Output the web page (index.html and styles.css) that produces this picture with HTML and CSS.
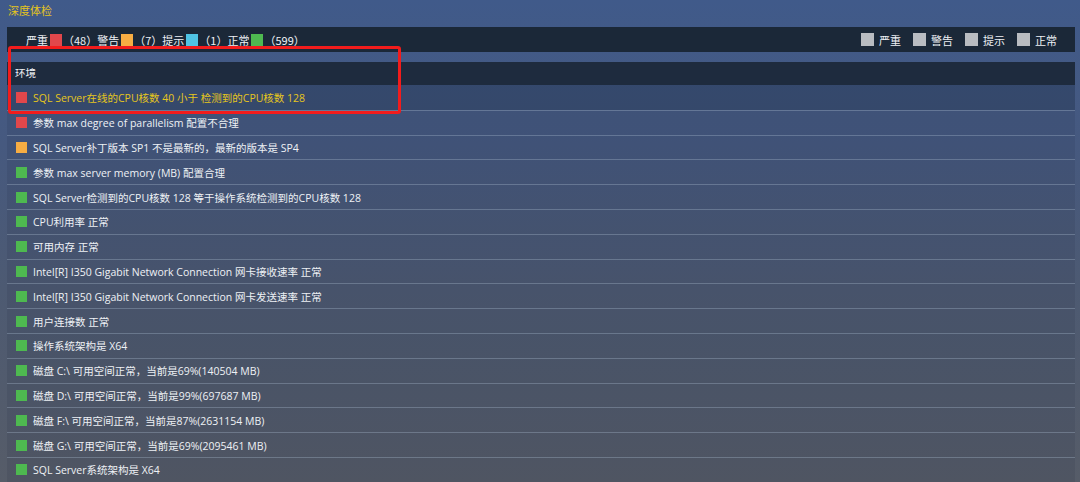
FILE: index.html
```html
<!DOCTYPE html>
<html lang="zh-CN">
<head>
    <meta charset="UTF-8">
    <title>深度体检</title>
    <link rel="stylesheet" href="styles.css">
</head>
<body>
    <div class="page">
        <div class="title">深度体检</div>

        <div class="summary">
            <div class="counts">
                <span>严重</span><i class="sq red"></i><span class="num">（48）</span>
                <span>警告</span><i class="sq orange"></i><span class="num">（7）</span>
                <span>提示</span><i class="sq blue"></i><span class="num">（1）</span>
                <span>正常</span><i class="sq green"></i><span class="num">（599）</span>
            </div>
            <div class="filters">
                <label><i class="box"></i>严重</label>
                <label><i class="box"></i>警告</label>
                <label><i class="box"></i>提示</label>
                <label><i class="box"></i>正常</label>
            </div>
        </div>

        <div class="table">
            <div class="group">环境</div>
            <div class="row active"><i class="sq red"></i>SQL Server在线的CPU核数 40 小于 检测到的CPU核数 128</div>
            <div class="row"><i class="sq red"></i>参数 max degree of parallelism 配置不合理</div>
            <div class="row"><i class="sq orange"></i>SQL Server补丁版本 SP1 不是最新的，最新的版本是 SP4</div>
            <div class="row"><i class="sq green"></i>参数 max server memory (MB) 配置合理</div>
            <div class="row"><i class="sq green"></i>SQL Server检测到的CPU核数 128 等于操作系统检测到的CPU核数 128</div>
            <div class="row"><i class="sq green"></i>CPU利用率 正常</div>
            <div class="row"><i class="sq green"></i>可用内存 正常</div>
            <div class="row"><i class="sq green"></i>Intel[R] I350 Gigabit Network Connection 网卡接收速率 正常</div>
            <div class="row"><i class="sq green"></i>Intel[R] I350 Gigabit Network Connection 网卡发送速率 正常</div>
            <div class="row"><i class="sq green"></i>用户连接数 正常</div>
            <div class="row"><i class="sq green"></i>操作系统架构是 X64</div>
            <div class="row"><i class="sq green"></i>磁盘 C:\ 可用空间正常，当前是69%(140504 MB)</div>
            <div class="row"><i class="sq green"></i>磁盘 D:\ 可用空间正常，当前是99%(697687 MB)</div>
            <div class="row"><i class="sq green"></i>磁盘 F:\ 可用空间正常，当前是87%(2631154 MB)</div>
            <div class="row"><i class="sq green"></i>磁盘 G:\ 可用空间正常，当前是69%(2095461 MB)</div>
            <div class="row"><i class="sq green"></i>SQL Server系统架构是 X64</div>
        </div>

        <div class="mark"></div>
    </div>
</body>
</html>
```

FILE: styles.css
```css
html, body {
    margin: 0;
    padding: 0;
    height: 100%;
    overflow: hidden;
}
body {
    font-family: "Open Sans", "Noto Sans CJK SC", sans-serif;
    font-size: 10.5px;
    color: #eef1f5;
    background: linear-gradient(180deg, #405a8a 0%, #46597f 30%, #4d5a72 60%, #565c68 100%);
}
.page {
    position: relative;
    padding: 0 5px 0 7px;
    height: 100%;
}
.title {
    color: #e4c41c;
    font-size: 11px;
    height: 27px;
    line-height: 22px;
    padding-left: 1px;
}
.summary {
    display: flex;
    justify-content: space-between;
    align-items: center;
    height: 25px;
    font-size: 11px;
    background-color: #1b2838;
    padding: 0 18px 0 19px;
}
.counts, .filters {
    display: flex;
    align-items: center;
}
.counts .sq {
    width: 12px;
    height: 12px;
    margin: 0 1px 0 2px;
}
.counts .num {
    font-family: "Noto Sans CJK SC", sans-serif;
}
.filters label {
    display: flex;
    align-items: center;
    margin-left: 12px;
}
.box {
    display: inline-block;
    width: 13px;
    height: 13px;
    background-color: #b9bcc1;
    margin-right: 5px;
}
.sq {
    display: inline-block;
    width: 11px;
    height: 11px;
}
.red { background-color: #e1474b; }
.orange { background-color: #f7ad43; }
.blue { background-color: #4fc3e3; }
.green { background-color: #4eb950; }
.table {
    margin-top: 10px;
    background-color: rgba(20, 30, 50, 0.1);
}
.group {
    height: 23px;
    line-height: 22px;
    padding-left: 8px;
    background-color: #1e2b3e;
}
.row {
    display: flex;
    align-items: center;
    height: 23.8px;
    border-top: 1px solid rgba(170, 185, 205, 0.35);
    padding-left: 9px;
}
.row .sq {
    margin-right: 6px;
}
.row.active {
    color: #e6c61c;
    border-top: none;
    height: 24.8px;
    background-color: rgba(30, 50, 75, 0.3);
}
.mark {
    position: absolute;
    left: 8px;
    top: 46px;
    width: 387px;
    height: 62px;
    border: 3px solid #f21c1c;
    border-radius: 3px;
}
```
